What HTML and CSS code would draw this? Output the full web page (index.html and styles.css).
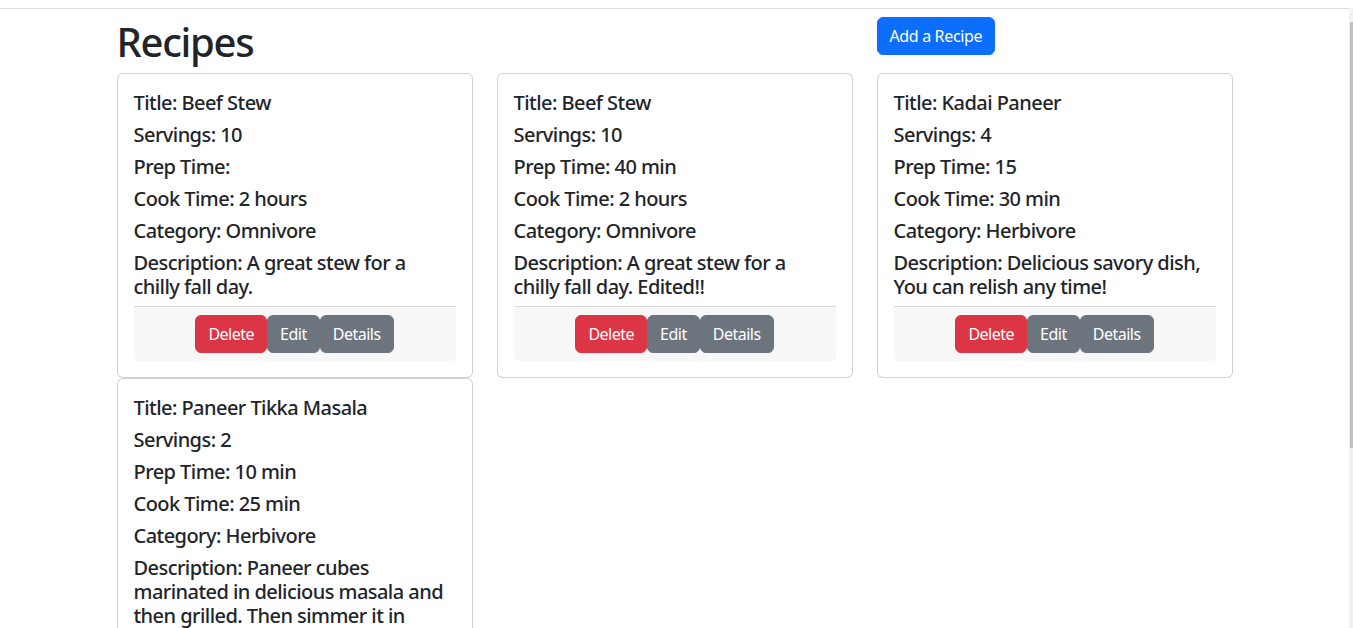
FILE: index.html
```html
<!DOCTYPE html>
<html lang="en">
<head>
<meta charset="utf-8">
<title>Recipes</title>
<link rel="stylesheet" href="styles.css">
</head>
<body>
<div class="shell">
  <div class="frame">
    <div class="container">
      <div class="header">
        <h1 class="page-title">Recipes</h1>
        <button class="btn btn-primary add-btn">Add a Recipe</button>
      </div>
      <div class="grid">
        <div class="card">
          <div class="card-body">
            <h5 class="line">Title: Beef Stew</h5>
            <h5 class="line">Servings: 10</h5>
            <h5 class="line">Prep Time: </h5>
            <h5 class="line">Cook Time: 2 hours</h5>
            <h5 class="line">Category: Omnivore</h5>
            <h5 class="line">Description: A great stew for a chilly fall day.</h5>
            <div class="card-footer">
              <button class="btn btn-danger">Delete</button><button class="btn btn-secondary">Edit</button><button class="btn btn-secondary">Details</button>
            </div>
          </div>
        </div>
        <div class="card">
          <div class="card-body">
            <h5 class="line">Title: Beef Stew</h5>
            <h5 class="line">Servings: 10</h5>
            <h5 class="line">Prep Time: 40 min</h5>
            <h5 class="line">Cook Time: 2 hours</h5>
            <h5 class="line">Category: Omnivore</h5>
            <h5 class="line">Description: A great stew for a chilly fall day. Edited!!</h5>
            <div class="card-footer">
              <button class="btn btn-danger">Delete</button><button class="btn btn-secondary">Edit</button><button class="btn btn-secondary">Details</button>
            </div>
          </div>
        </div>
        <div class="card">
          <div class="card-body">
            <h5 class="line">Title: Kadai Paneer</h5>
            <h5 class="line">Servings: 4</h5>
            <h5 class="line">Prep Time: 15</h5>
            <h5 class="line">Cook Time: 30 min</h5>
            <h5 class="line">Category: Herbivore</h5>
            <h5 class="line">Description: Delicious savory dish, You can relish any time!</h5>
            <div class="card-footer">
              <button class="btn btn-danger">Delete</button><button class="btn btn-secondary">Edit</button><button class="btn btn-secondary">Details</button>
            </div>
          </div>
        </div>
        <div class="card">
          <div class="card-body">
            <h5 class="line">Title: Paneer Tikka Masala</h5>
            <h5 class="line">Servings: 2</h5>
            <h5 class="line">Prep Time: 10 min</h5>
            <h5 class="line">Cook Time: 25 min</h5>
            <h5 class="line">Category: Herbivore</h5>
            <h5 class="line">Description: Paneer cubes marinated in delicious masala and then grilled. Then simmer it in tomato based gravy.</h5>
            <div class="card-footer">
              <button class="btn btn-danger">Delete</button><button class="btn btn-secondary">Edit</button><button class="btn btn-secondary">Details</button>
            </div>
          </div>
        </div>
      </div>
    </div>
  </div>
  <div class="scrollbar"><div class="thumb"></div></div>
</div>
</body>
</html>
```
FILE: styles.css
```css
* { box-sizing: border-box; }
html, body { margin: 0; padding: 0; background: #fff; }
body {
  font-family: "Noto Sans", "Open Sans", sans-serif;
  color: #212529;
  font-size: 16px;
  line-height: 1.5;
}
.shell {
  display: flex;
  align-items: flex-start;
  padding-top: 8px;
}
.frame {
  flex: 1;
  border-top: 1px solid #dedede;
  min-width: 0;
}
.scrollbar {
  width: 4px;
  height: 620px;
  background: #f1f1f1;
  padding-top: 14px;
}
.thumb {
  width: 3px;
  margin-left: 1px;
  height: 426px;
  background: #c1c1c1;
}
.container {
  max-width: 1140px;
  margin: 0 auto;
  padding: 0 12px;
}
.header {
  display: grid;
  grid-template-columns: repeat(3, 1fr);
  column-gap: 24px;
  padding-top: 8px;
}
.page-title {
  grid-column: span 2;
  margin: 0 0 8px;
  padding-top: 1px;
  height: 48px;
  font-size: 40px;
  font-weight: 500;
  line-height: 1.2;
  letter-spacing: -1.3px;
}
.add-btn { justify-self: start; align-self: start; letter-spacing: -0.35px; }
.grid {
  display: grid;
  grid-template-columns: repeat(3, 1fr);
  column-gap: 24px;
  row-gap: 0;
  align-items: start;
}
.card {
  border: 1px solid rgba(0,0,0,.175);
  border-radius: 6px;
  background: #fff;
}
.card-body { padding: 17px 16px 16px; }
.line {
  margin: 0 0 8px;
  font-size: 20px;
  font-weight: 500;
  line-height: 1.2;
  letter-spacing: -0.55px;
}
.card-footer {
  display: flex;
  justify-content: center;
  margin-top: -1px;
  padding: 8px 16px;
  background: #f7f7f7;
  border-top: 1px solid #dadada;
  border-radius: 0 0 5px 5px;
}
.card-footer .btn { letter-spacing: -0.5px; }
.btn {
  font-family: inherit;
  font-size: 16px;
  line-height: 1.5;
  padding: 6px 12px;
  border: 1px solid transparent;
  border-radius: 6px;
  color: #fff;
  cursor: pointer;
}
.btn-primary { background: #0d6efd; border-color: #0d6efd; }
.btn-danger { background: #dc3545; border-color: #dc3545; }
.btn-secondary { background: #6c757d; border-color: #6c757d; }
```
